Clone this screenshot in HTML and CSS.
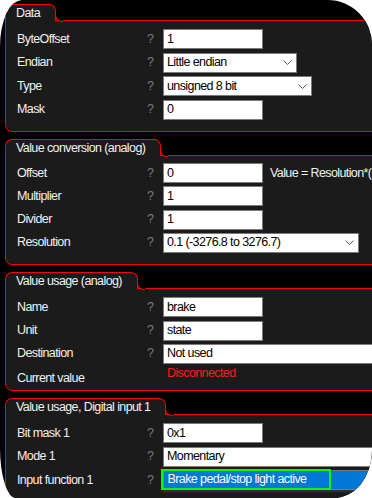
FILE: index.html
```html
<!DOCTYPE html>
<html>
<head>
<meta charset="utf-8">
<link rel="stylesheet" href="styles.css">
</head>
<body>
<div class="window">
  <section class="group">
    <div class="tab">Data</div>
    <div class="box">
      <div class="row"><span class="lbl">ByteOffset</span><span class="q">?</span><div class="field w100">1</div></div>
      <div class="row"><span class="lbl">Endian</span><span class="q">?</span><div class="field combo w134">Little endian<svg class="chev" width="9" height="5" viewBox="0 0 9 5"><polyline points="0.5,0.5 4.5,4.5 8.5,0.5"/></svg></div></div>
      <div class="row"><span class="lbl">Type</span><span class="q">?</span><div class="field combo w149">unsigned 8 bit<svg class="chev" width="9" height="5" viewBox="0 0 9 5"><polyline points="0.5,0.5 4.5,4.5 8.5,0.5"/></svg></div></div>
      <div class="row"><span class="lbl">Mask</span><span class="q">?</span><div class="field w100">0</div></div>
    </div>
  </section>

  <section class="group">
    <div class="tab">Value conversion (analog)</div>
    <div class="box box-conv">
      <div class="row"><span class="lbl">Offset</span><span class="q">?</span><div class="inline"><div class="field w100">0</div><span class="formula">Value = Resolution*(Input value + Offset)*Multiplier/Divider</span></div></div>
      <div class="row"><span class="lbl">Multiplier</span><span class="q">?</span><div class="field w100">1</div></div>
      <div class="row"><span class="lbl">Divider</span><span class="q">?</span><div class="field w100">1</div></div>
      <div class="row"><span class="lbl">Resolution</span><span class="q">?</span><div class="field combo w196">0.1 (-3276.8 to 3276.7)<svg class="chev" width="9" height="5" viewBox="0 0 9 5"><polyline points="0.5,0.5 4.5,4.5 8.5,0.5"/></svg></div></div>
    </div>
  </section>

  <section class="group">
    <div class="tab">Value usage (analog)</div>
    <div class="box box-usage">
      <div class="row"><span class="lbl">Name</span><span class="q">?</span><div class="field w100">brake</div></div>
      <div class="row"><span class="lbl">Unit</span><span class="q">?</span><div class="field w100">state</div></div>
      <div class="row"><span class="lbl">Destination</span><span class="q">?</span><div class="field wide">Not used</div></div>
      <div class="row row-status"><span class="lbl status-lbl">Current value</span><span class="q"></span><span class="status">Disconnected</span></div>
    </div>
  </section>

  <section class="group group-last">
    <div class="tab">Value usage, Digital input 1</div>
    <div class="box">
      <div class="row"><span class="lbl">Bit mask 1</span><span class="q">?</span><div class="field w100">0x1</div></div>
      <div class="row"><span class="lbl">Mode 1</span><span class="q">?</span><div class="field wide">Momentary</div></div>
      <div class="row"><span class="lbl">Input function 1</span><span class="q">?</span><div class="field wide selected"><span class="focus">Brake pedal/stop light active</span></div></div>
    </div>
  </section>
</div>
</body>
</html>
```

FILE: styles.css
```css
html, body {
  margin: 0;
  padding: 0;
  background: #ffffff;
}

body {
  font-family: "Liberation Sans", Arial, sans-serif;
  font-size: 12.5px;
  letter-spacing: -0.6px;
  color: #f2f2f2;
}

.window {
  width: 372px;
  height: 498px;
  box-sizing: border-box;
  overflow: hidden;
  background: #000000;
  padding: 4px 0 0 5px;
  border-radius: 22px 44px 38px 16px / 46px 45px 48px 50px;
}

.group {
  width: 440px;
  margin-bottom: 7px;
}

.group-last {
  margin-top: 4px;
}

.tab {
  position: relative;
  z-index: 1;
  display: inline-block;
  height: 16px;
  line-height: 16px;
  padding: 0 15px 0 10px;
  margin-bottom: -1px;
  background: #1b1b1b;
  border: 1px solid #ff0000;
  border-bottom: 0;
  border-radius: 7px 7px 0 0;
  color: #f2f2f2;
  white-space: nowrap;
}

.tab::after {
  content: "";
  position: absolute;
  right: -8px;
  bottom: -1px;
  width: 7px;
  height: 7px;
  background: #000000;
  border-left: 1px solid #ff0000;
  border-bottom: 1px solid #ff0000;
  border-bottom-left-radius: 7px;
}

.box {
  background: #1b1b1b;
  border: 1px solid #ff0000;
  border-radius: 0 7px 7px 7px;
  padding: 8px 0 11.5px 11px;
  display: flex;
  flex-direction: column;
  gap: 3.5px;
}

.box-conv {
  padding-top: 7px;
  gap: 3.3px;
}

.box-usage {
  gap: 3.3px;
  padding-bottom: 4px;
}

.row {
  display: grid;
  grid-template-columns: 130px 16px 1fr;
  align-items: center;
}

.lbl {
  white-space: nowrap;
  line-height: 15px;
}

.q {
  color: #7c7c7c;
  line-height: 15px;
}

.field {
  box-sizing: border-box;
  height: 20px;
  background: #ffffff;
  border: 1.5px solid #7a7a7a;
  color: #000000;
  line-height: 17px;
  padding: 0 3px;
  white-space: nowrap;
  display: flex;
  align-items: center;
  justify-content: space-between;
}

.w100 { width: 100px; }
.w134 { width: 134px; }
.w149 { width: 149px; }
.w196 { width: 196px; }
.wide { width: 260px; }

.chev {
  fill: none;
  stroke: #5a5a5a;
  stroke-width: 1;
  margin-right: 1px;
}

.inline {
  display: flex;
  align-items: center;
  gap: 7px;
  white-space: nowrap;
}

.formula {
  color: #f2f2f2;
}

.row-status {
  align-items: start;
}

.status-lbl {
  margin-top: 4px;
}

.status {
  color: #ff1a1a;
  line-height: 15px;
  margin-top: -1px;
  padding-left: 4px;
}

.selected {
  background: #0078d7;
  padding: 0;
  justify-content: flex-start;
  box-shadow: 0 2px 2px rgba(60, 60, 60, 0.8);
}

.focus {
  box-sizing: border-box;
  height: 21px;
  margin: -1.5px 0 0 -3.5px;
  width: 170px;
  border: 2px solid #00ff00;
  color: #ffffff;
  line-height: 17px;
  padding-left: 5px;
}
```
